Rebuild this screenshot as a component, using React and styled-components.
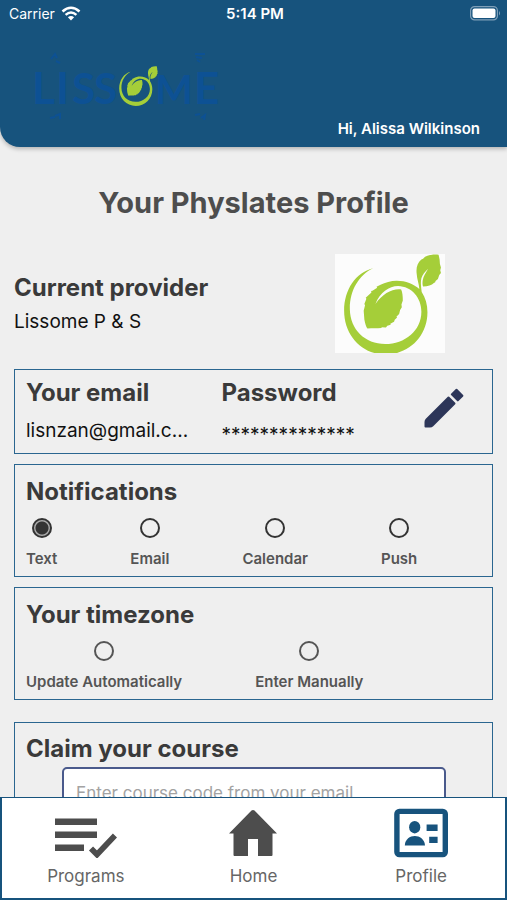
import React, { useState } from 'react';
import styled, { createGlobalStyle } from 'styled-components';

const GlobalStyle = createGlobalStyle`
  * {
    box-sizing: border-box;
  }
  body {
    margin: 0;
    background: #efefef;
    font-family: Inter, "Liberation Sans", sans-serif;
  }
`;

const LeafShapes = () => (
  <g fill="#a5ce39">
    <path d="M160 84 C108 96 74 148 74 210 C74 284 128 340 197 340 C266 340 321 286 321 215 C321 192 315 172 304 155 C302 140 300 128 303 114 C306 104 314 94 323 86 C316 98 309 108 307 120 C306 128 306 134 308 138 C322 138 334 134 340 128 L344 126 L345 122 L352 116 L356 104 L361 98 L359 90 L361 82 L358 72 L357 58 L354 44 C342 42 326 44 314 50 L308 56 L303 58 C291 68 287 82 289 100 C290 118 296 130 297 146 C281 131 256 121 230 121 C212 121 196 126 182 133 L170 139 L172 142 L158 151 L154 152 L155 156 L146 164 L138 172 L140 175 L134 190 L136 194 L132 210 L134 236 C136 248 139 257 143 263 C158 261 171 263 184 261 L186 259 L198 260 L202 255 L212 252 L211 249 L222 243 L224 237 L231 230 L229 228 L237 220 L240 208 L245 200 L244 192 L248 180 C248 166 247 156 243 147 C216 144 188 160 167 190 C180 156 207 137 234 137 C274 138 303 172 303 213 C303 269 254 309 196 309 C136 309 92 266 91 206 C90 150 118 104 160 84 Z" />
  </g>
);

const ProviderMark = () => (
  <svg width="100%" viewBox="47 42 326 294" role="img" aria-label="Lissome">
    <LeafShapes />
  </svg>
);

const Wordmark = () => (
  <svg width="196" height="70" viewBox="-6 0 196 70" role="img" aria-label="Lissome">
    <g fill="#0d5194" fontFamily="Lato, sans-serif" fontSize="44" fontWeight="700">
      <text x="-4" y="54">L</text>
      <text x="20" y="54">I</text>
      <text x="36" y="54" fontSize="42">S</text>
      <text x="58" y="54" fontSize="42">S</text>
      <text x="119" y="54" fontSize="40">M</text>
      <text x="158" y="54">E</text>
    </g>
    <g fill="none" stroke="#0d5194" strokeWidth="2">
      <path d="M15 9 L19 4 L21 8 M20 11 L24 13" />
      <path d="M159 4 L169 4 M160 7 L166 8 M161 10 L164 12" />
      <path d="M14 68 L19 67 M19 66 L24 64 L24 69" />
      <path d="M159 65 L164 64 M165 68 L169 65 L168 70" />
    </g>
    <svg x="83" y="16" width="39" height="40" viewBox="74 42 288 298">
      <LeafShapes />
    </svg>
  </svg>
);

const WifiIcon = () => (
  <svg width="20" height="15" viewBox="0 0 20 15" fill="none" stroke="#fff" aria-hidden="true">
    <path d="M1.5 5.5 Q10 -2 18.5 5.5" strokeWidth="2.6" />
    <path d="M4.6 8.9 Q10 4.2 15.4 8.9" strokeWidth="2.5" />
    <path d="M10 14.4 L6.9 11.3 Q10 8.7 13.1 11.3 Z" fill="#fff" stroke="none" />
  </svg>
);

const BatteryIcon = () => (
  <svg width="31" height="15" viewBox="0 0 31 15" aria-hidden="true">
    <rect x="0.6" y="0.6" width="26.8" height="13.3" rx="4" fill="none" stroke="#7f9fb8" strokeWidth="1.2" />
    <rect x="2.5" y="2.5" width="23" height="9.5" rx="2" fill="#fff" />
    <path d="M29 5 Q31 7.2 29 9.6 Z" fill="#7f9fb8" />
  </svg>
);

const PencilIcon = () => (
  <svg width="42" height="42" viewBox="0 0 42 42" fill="#2d3659" stroke="#2d3659" strokeWidth="2" strokeLinejoin="round" aria-hidden="true">
    <path d="M25.5 9.5 L31.5 15.5 L9.5 37.5 Q8.5 38.5 7 38.5 H2.5 V34 Q2.5 32.5 3.5 31.5 Z" />
    <path d="M28.8 6.4 L33.5 1.8 L39.4 7.7 L34.8 12.4 Z" />
  </svg>
);

const ProgramsIcon = () => (
  <svg width="62" height="50" viewBox="0 0 62 50" fill="#4d4d4d" aria-hidden="true">
    <path d="M0 10.5h42v6.5h-42zM0 23.5h42v6.5h-42zM0 36.5h29v6.5h-29z" />
    <path d="M36 40.5 L42 46.5 L60 27.5" fill="none" stroke="#4d4d4d" strokeWidth="5.8" />
  </svg>
);

const HomeIcon = () => (
  <svg width="50" height="50" viewBox="0 0 50 50" fill="#4d4d4d" aria-hidden="true">
    <path d="M23.5 2.5 Q25 1.5 26.5 2.5 L49 25.5 H44.5 V47 Q44.5 48 43.5 48 H30 V31 H20 V48 H6.5 Q5.5 48 5.5 47 V25.5 H1 Z" />
  </svg>
);

const ProfileIcon = () => (
  <svg width="54" height="50" viewBox="0 0 54 50" fill="#17537d" aria-hidden="true">
    <rect x="2.9" y="3.4" width="48.4" height="43.2" rx="2.5" fill="none" stroke="#17537d" strokeWidth="5.4" />
    <ellipse cx="20.7" cy="19.2" rx="5.6" ry="6.2" />
    <path d="M10.8 37.4 C11.5 25 30 25 31 37.4 Z" />
    <path d="M32.6 16.4h11v6.5h-11zM35.2 28.7h8.4v6.3h-8.4z" />
  </svg>
);

const channels = ['Text', 'Email', 'Calendar', 'Push'];
const zoneModes = ['Update Automatically', 'Enter Manually'];
const tabs = [
  { label: 'Programs', icon: <ProgramsIcon /> },
  { label: 'Home', icon: <HomeIcon /> },
  { label: 'Profile', icon: <ProfileIcon />, active: true },
];

const App = () => {
  const [channel, setChannel] = useState('Text');
  const [zoneMode, setZoneMode] = useState('');

  return (
    <Screen>
      <GlobalStyle />
      <Header>
        <StatusBar>
          <Carrier>Carrier <WifiIcon /></Carrier>
          <Clock>5:14 PM</Clock>
          <Battery><BatteryIcon /></Battery>
        </StatusBar>
        <Brand><Wordmark /></Brand>
        <Greeting>Hi, Alissa Wilkinson</Greeting>
      </Header>
      <Content>
        <Title>Your Physlates Profile</Title>
        <Provider>
          <div>
            <Heading>Current provider</Heading>
            <Value>Lissome P &amp; S</Value>
          </div>
          <ProviderLogo><ProviderMark /></ProviderLogo>
        </Provider>
        <AccountCard>
          <Field>
            <Heading>Your email</Heading>
            <Value $spaced>lisnzan@gmail.c...</Value>
          </Field>
          <Field>
            <Heading>Password</Heading>
            <Mask>**************</Mask>
          </Field>
          <EditButton aria-label="Edit account"><PencilIcon /></EditButton>
        </AccountCard>
        <Card>
          <Heading>Notifications</Heading>
          <Options role="radiogroup" aria-label="Notifications">
            {channels.map((name) => (
              <Option key={name}>
                <Radio
                  name="channel"
                  checked={channel === name}
                  onChange={() => setChannel(name)}
                />
                {name}
              </Option>
            ))}
          </Options>
        </Card>
        <Card>
          <Heading>Your timezone</Heading>
          <Options role="radiogroup" aria-label="Your timezone">
            {zoneModes.map((name) => (
              <Option key={name}>
                <Radio
                  $muted
                  name="timezone"
                  checked={zoneMode === name}
                  onChange={() => setZoneMode(name)}
                />
                {name}
              </Option>
            ))}
          </Options>
        </Card>
        <ClaimCard>
          <Heading as="label" htmlFor="course-code">Claim your course</Heading>
          <CodeInput id="course-code" placeholder="Enter course code from your email" />
        </ClaimCard>
      </Content>
      <TabBar>
        {tabs.map((tab) => (
          <Tab key={tab.label} href="#" aria-current={tab.active ? 'page' : undefined}>
            {tab.icon}
            {tab.label}
          </Tab>
        ))}
      </TabBar>
    </Screen>
  );
}

const Screen = styled.div`
  display: flex;
  flex-direction: column;
  height: 100vh;
`;

const Header = styled.header`
  flex: none;
  display: flex;
  flex-direction: column;
  padding-bottom: 9px;
  color: white;
  background: #17537d;
  border-bottom-left-radius: 20px;
  box-shadow: 0 2px 4px rgba(0, 0, 0, 0.25);
`;

const StatusBar = styled.div`
  display: grid;
  grid-template-columns: 1fr auto 1fr;
  align-items: center;
  height: 28px;
  padding: 0 6px 2px 9px;
  font-size: 14px;
`;

const Carrier = styled.span`
  display: flex;
  align-items: center;
  gap: 6px;
`;

const Clock = styled.span`
  font-size: 15px;
  font-weight: 600;
`;

const Battery = styled.span`
  display: flex;
  justify-content: flex-end;
`;

const Brand = styled.div`
  display: flex;
  padding: 22px 30px 0;
`;

const Greeting = styled.div`
  padding-right: 27px;
  text-align: right;
  font-size: 15px;
  line-height: 18px;
  font-weight: 600;
`;

const Content = styled.main`
  flex: 1;
  min-height: 0;
  overflow-y: auto;
  scrollbar-width: none;
  padding: 0 14px;
`;

const Title = styled.h1`
  margin: 37px 0 32px;
  text-align: center;
  font-size: 29px;
  line-height: 38px;
  font-weight: 700;
  color: #4d4d4d;
`;

const Heading = styled.h2`
  display: block;
  margin: 0;
  font-size: 24px;
  line-height: 32px;
  font-weight: 700;
  color: #3a3a3a;
`;

const Value = styled.p`
  margin: ${(props) => (props.$spaced ? '8px' : '4px')} 0 0;
  overflow: hidden;
  white-space: nowrap;
  font-size: 19px;
  line-height: 28px;
  color: #111;
`;

const Mask = styled(Value)`
  margin-top: 12px;
`;

const Provider = styled.section`
  display: flex;
  align-items: center;
  justify-content: space-between;
  margin-bottom: 16px;
  padding-right: 48px;
`;

const ProviderLogo = styled.div`
  display: flex;
  width: 110px;
  background: #fcfcfc;
`;

const Card = styled.section`
  margin-bottom: 10px;
  padding: 11px 11px 7px;
  border: 1px solid #2a6690;
`;

const AccountCard = styled(Card)`
  display: grid;
  grid-template-columns: 1fr 1fr auto;
  padding: 7px 21px 4px 11px;
`;

const Field = styled.div`
  min-width: 0;
`;

const EditButton = styled.button`
  display: flex;
  align-self: start;
  margin-top: 11px;
  padding: 0 6px;
  border: 0;
  background: none;
`;

const Options = styled.div`
  display: flex;
  flex-wrap: wrap;
  gap: 10px 73px;
  margin-top: 10px;
`;

const Option = styled.label`
  display: flex;
  flex-direction: column;
  align-items: center;
  gap: 11px;
  font-size: 15px;
  line-height: 20px;
  font-weight: 600;
  color: #555;
`;

const Radio = styled.input.attrs({ type: 'radio' })`
  appearance: none;
  width: 20px;
  height: 20px;
  margin: 0;
  border: 2px solid ${(props) => (props.$muted ? '#555' : '#333')};
  border-radius: 50%;

  &:checked {
    background: radial-gradient(circle, #333 0 6px, #aaa 7px);
  }
`;

const ClaimCard = styled(Card)`
  margin-top: 22px;
  padding: 10px 11px 20px;
`;

const CodeInput = styled.input`
  display: block;
  width: calc(100% - 71px);
  height: 52px;
  margin: 2px 0 0 36px;
  padding: 0 12px;
  border: 2px solid #4a5a8c;
  border-radius: 5px;
  background: white;
  font: 17px Inter, sans-serif;

  &::placeholder {
    color: #a3a3a3;
  }
`;

const TabBar = styled.nav`
  flex: none;
  display: grid;
  grid-template-columns: repeat(3, 1fr);
  padding: 10px 0;
  border: 1px solid #17537d;
  border-width: 1px 2px;
  border-bottom-width: 2px;
  background: white;
`;

const Tab = styled.a`
  display: flex;
  flex-direction: column;
  align-items: center;
  gap: 6px;
  font-size: 17px;
  line-height: 24px;
  color: #666;
  text-decoration: none;
`;

export default App;
